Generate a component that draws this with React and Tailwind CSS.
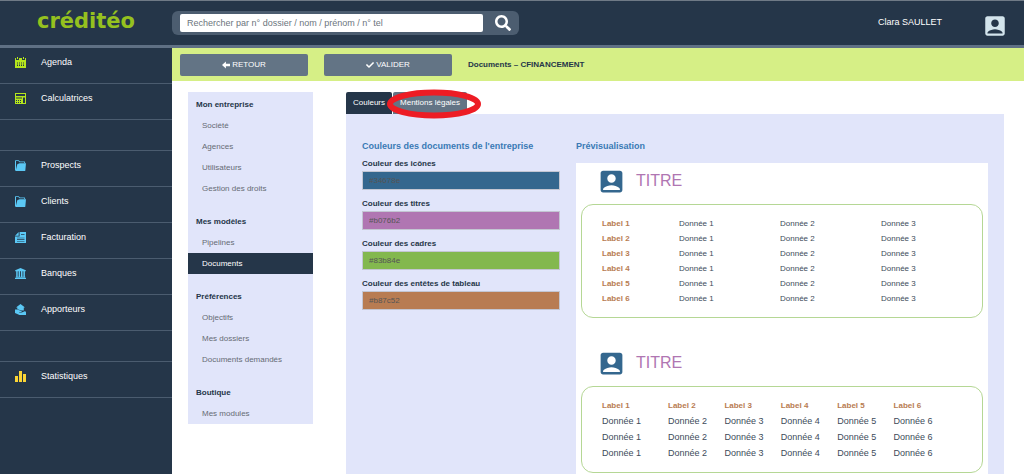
import { MdAccountBox } from 'react-icons/md';
import { FaCheck, FaSearch } from 'react-icons/fa';

const mainMenu = [
    [
        { label: 'Agenda', icon: CalendarIcon, color: 'text-[#b5e61d]' },
        { label: 'Calculatrices', icon: CalculatorIcon, color: 'text-[#b5e61d]' },
    ],
    [
        { label: 'Prospects', icon: FolderIcon, color: 'text-[#5bc8f5]' },
        { label: 'Clients', icon: FolderIcon, color: 'text-[#5bc8f5]' },
        { label: 'Facturation', icon: InvoiceIcon, color: 'text-[#5bc8f5]' },
        { label: 'Banques', icon: BankIcon, color: 'text-[#5bc8f5]' },
        { label: 'Apporteurs', icon: ReferrerIcon, color: 'text-[#5bc8f5]' },
    ],
    [{ label: 'Statistiques', icon: StatsIcon, color: 'text-[#fcd535]' }],
];

const settingsMenu = [
    { title: 'Mon entreprise', items: ['Société', 'Agences', 'Utilisateurs', 'Gestion des droits'] },
    { title: 'Mes modèles', items: ['Pipelines', 'Documents'] },
    { title: 'Préférences', items: ['Objectifs', 'Mes dossiers', 'Documents demandés'] },
    { title: 'Boutique', items: ['Mes modules'] },
];

const colorFields = [
    { id: 'icones', label: 'Couleur des icônes', value: '#34678e', bg: 'bg-[#34678e]' },
    { id: 'titres', label: 'Couleur des titres', value: '#b076b2', bg: 'bg-[#b076b2]' },
    { id: 'cadres', label: 'Couleur des cadres', value: '#83b84e', bg: 'bg-[#83b84e]' },
    { id: 'entetes', label: 'Couleur des entêtes de tableau', value: '#b87c52', bg: 'bg-[#b87c52]' },
];

const numbers = [1, 2, 3, 4, 5, 6];

function CalendarIcon() {
    return (
        <svg viewBox="0 0 11 11" className="size-[11px]" fill="currentColor">
            <path d="M0 1h1v2h3V1h3v2h3V1h1v3H0z" />
            <path d="M2 0h1v2H2zM8 0h1v2H8z" />
            <path
                fillRule="evenodd"
                d="M0 4h11v7H0zM2 5.500v1h1v-1zm2 0v1h1v-1zm2 0v1h1v-1zm2 0v1h1v-1zM2 7.500v1.500h1v-1.500zm2 0v1.500h1v-1.500zm2 0v1.500h1v-1.500zm2 0v1.500h1v-1.500z"
            />
        </svg>
    );
}

function CalculatorIcon() {
    return (
        <svg viewBox="0 0 11 11" className="size-[11px]" fill="currentColor">
            <path
                fillRule="evenodd"
                d="M0 0h11v11H0zM1 1v2h9V1zM1 4.500v1h6v-1zM1 7v1h1V7zm2 0v1h1V7zm2 0v1h1V7zM1 9v1h1V9zm2 0v1h1V9zm2 0v1h1V9zM8 4.500V10h2V4.500z"
            />
        </svg>
    );
}

function FolderIcon() {
    return (
        <svg viewBox="0 0 11 11" className="size-[11px]" fill="currentColor">
            <path d="M0 10.500V.8Q0 .2.600.2h3L5 1.400h4.600q.5 0 .5.500V3H9.200V2.300H4.600L3.300 1.100H1V10.500z" />
            <path d="M2.300 4.200 4.500 3.200H11L10.300 10.400q-.1.600-.7.600H.6z" />
        </svg>
    );
}

function InvoiceIcon() {
    return (
        <svg viewBox="0 0 11 11" className="size-[11px]" fill="currentColor">
            <path
                fillRule="evenodd"
                d="M4.600 0H11v11H0V4.600h4.600zM6 2.200v.8h3.500v-.8zM2 5.700v.6h7.500v-.6zM2 7.300v.6h7.500v-.6zM2 8.900v.6h7.500v-.6z"
            />
            <path d="M3.700 0v3.700H0z" />
        </svg>
    );
}

function BankIcon() {
    return (
        <svg viewBox="0 0 11 11" className="size-[11px]" fill="currentColor">
            <path d="M5.500 0 10.800 2.200V3.300H.2V2.200zM1.200 3.300h1.500v5.700H1.200zM3.600 3.300h1.500v5.700H3.600zM6 3.300h1.500v5.700H6zM8.400 3.300h1.500v5.700H8.400zM.6 8.800h9.800v1H.6zM0 10h11v1H0z" />
        </svg>
    );
}

function ReferrerIcon() {
    return (
        <svg viewBox="0 0 11 11" className="size-[11px]" fill="currentColor">
            <path d="M5.500 0 10 3.400H8.800V6.500H6.500L2.300 5.300V3.400H1z" />
            <path d="M0 5.600h2.300L6.400 7q.7.600 0 1H4.200v.4h2.600l2.900-1.100q1.200 0 1.300.9V11H4.500L0 9z" />
        </svg>
    );
}

function StatsIcon() {
    return (
        <svg viewBox="0 0 11 11" className="size-[11px]" fill="currentColor">
            <path d="M0 5h3v6H0zM4 0h3v11H4zM8 3h3v8H8z" />
        </svg>
    );
}

function BackArrow() {
    return (
        <svg viewBox="0 0 8 8" className="size-2" fill="currentColor">
            <path d="M0 4 3.900.4V2.700H8V5.300H3.900V7.600z" />
        </svg>
    );
}

function TopBar() {
    return (
        <header className="flex h-12 items-stretch border-t border-b-[3px] border-t-[#6f7a86] border-b-[#5f7084] bg-[#253649]">
            <a href="#" className="w-[172px] pl-[37px] font-['DejaVu_Sans',sans-serif] text-[21px] leading-10 font-bold text-[#95c11f]">
                créditéo
            </a>
            <form className="mt-2.5 flex h-6 w-[347px] items-center rounded-md bg-[#4c5d70] px-2">
                <input
                    type="search"
                    aria-label="Rechercher"
                    placeholder="Rechercher par n° dossier / nom / prénom / n° tel"
                    className="h-[18px] min-w-0 flex-1 rounded-xs bg-white px-[7px] text-[9px] text-gray-700 placeholder:text-[#6c757d]"
                />
                <button type="button" aria-label="Lancer la recherche" className="ml-3 text-white">
                    <FaSearch className="size-4" />
                </button>
            </form>
            <div className="ml-auto flex items-start gap-10 pr-4">
                <span className="pt-[15px] text-[9px] leading-3 text-white">Clara SAULLET</span>
                <MdAccountBox className="mt-3 size-[26px] text-[#d3e4ec]" />
            </div>
        </header>
    );
}

function Sidebar() {
    return (
        <nav className="w-[172px] shrink-0 bg-[#253649]">
            {mainMenu.map((group, index) => (
                <ul key={index} className={index > 0 ? 'border-[#4b5c6f] pt-[30px]' : ''}>
                    {group.map(({ label, icon: Icon, color }, row) => (
                        <li
                            key={label}
                            className={`border-b border-[#4b5c6f] ${index > 0 && row === 0 ? 'h-[37px] border-t' : 'h-9'}`}
                        >
                            <a href="#" className="flex h-[29px] items-center gap-[15px] pl-[15px] text-[9px] text-white">
                                <span className={color}>
                                    <Icon />
                                </span>
                                {label}
                            </a>
                        </li>
                    ))}
                </ul>
            ))}
        </nav>
    );
}

function ActionBar() {
    return (
        <div className="flex h-[33px] items-center gap-4 bg-[#d6ef86] px-2">
            <button className="flex h-[22px] w-32 items-center justify-center gap-0.5 rounded-xs bg-[#637485] text-[8px] text-white">
                <BackArrow />
                RETOUR
            </button>
            <button className="flex h-[22px] w-32 items-center justify-center gap-0.5 rounded-xs bg-[#637485] text-[8px] text-white">
                <FaCheck className="size-2" />
                VALIDER
            </button>
            <h1 className="text-[8px] font-bold text-[#253649]">Documents – CFINANCEMENT</h1>
        </div>
    );
}

function SettingsNav() {
    return (
        <nav className="flex w-[125px] shrink-0 flex-col gap-[13px] self-start bg-[#e1e5fa] pt-[3px] text-[8px]">
            {settingsMenu.map((group) => (
                <section key={group.title}>
                    <h2 className="pl-2 leading-5 font-bold text-[#253649]">{group.title}</h2>
                    <ul>
                        {group.items.map((item) => (
                            <li key={item}>
                                <a
                                    href="#"
                                    className={`block pl-3.5 leading-[21px] ${
                                        item === 'Documents' ? 'bg-[#253649] text-white' : 'text-[#666b74]'
                                    }`}
                                >
                                    {item}
                                </a>
                            </li>
                        ))}
                    </ul>
                </section>
            ))}
        </nav>
    );
}

function ColorForm() {
    return (
        <form className="w-[198px] shrink-0">
            <h2 className="text-[9px] leading-4 font-bold text-[#3a7ab5]">Couleurs des documents de l'entreprise</h2>
            <div className="mt-1 flex flex-col gap-2">
                {colorFields.map((field) => (
                    <div key={field.id} className="flex flex-col gap-px text-[8px]">
                        <label htmlFor={field.id} className="leading-3 font-bold text-[#253649]">
                            {field.label}
                        </label>
                        <input
                            id={field.id}
                            type="text"
                            defaultValue={field.value}
                            className={`h-[19px] w-full border border-[#c3c6d2] px-1.5 text-[#555555] ${field.bg}`}
                        />
                    </div>
                ))}
            </div>
        </form>
    );
}

function PreviewTitle() {
    return (
        <div className="flex h-9 items-center gap-2.5 pl-4">
            <MdAccountBox className="size-[29px] text-[#34678e]" />
            <h3 className="text-[16px] text-[#b076b2]">TITRE</h3>
        </div>
    );
}

function Preview() {
    return (
        <section className="flex min-w-0 flex-1 flex-col">
            <h2 className="text-[9px] leading-4 font-bold text-[#3a7ab5]">Prévisualisation</h2>
            <div className="mt-[9px] flex-1 bg-white px-[5px]">
                <PreviewTitle />
                <div className="mt-[5px] h-[114px] rounded-xl border border-[#b5d795] pt-[11px] pl-5">
                    <table className="w-full table-fixed text-left text-[8px] leading-[15px] text-[#3d4b5a]">
                        <tbody>
                            {numbers.map((n) => (
                                <tr key={n}>
                                    <th scope="row" className="w-[77px] font-bold text-[#b87c52]">
                                        Label {n}
                                    </th>
                                    <td>Donnée 1</td>
                                    <td>Donnée 2</td>
                                    <td>Donnée 3</td>
                                </tr>
                            ))}
                        </tbody>
                    </table>
                </div>
                <div className="mt-[27px]">
                    <PreviewTitle />
                </div>
                <div className="mt-[5px] h-[87px] rounded-xl border border-[#b5d795] pt-[11px] pr-8 pl-5">
                    <table className="w-full table-fixed text-left text-[9px] leading-4 text-[#3d4b5a]">
                        <thead>
                            <tr className="text-[8px] leading-[15px] text-[#b87c52]">
                                {numbers.map((n) => (
                                    <th key={n} scope="col" className="font-bold first:w-[66px]">
                                        Label {n}
                                    </th>
                                ))}
                            </tr>
                        </thead>
                        <tbody>
                            {[0, 1, 2].map((row) => (
                                <tr key={row}>
                                    {numbers.map((n) => (
                                        <td key={n}>Donnée {n}</td>
                                    ))}
                                </tr>
                            ))}
                        </tbody>
                    </table>
                </div>
            </div>
        </section>
    );
}

export default function App() {
    return (
        <div className="flex min-h-screen flex-col bg-white font-['Liberation_Sans',Arial,sans-serif]">
            <TopBar />
            <div className="flex flex-1">
                <Sidebar />
                <main className="flex min-w-0 flex-1 flex-col">
                    <ActionBar />
                    <div className="flex flex-1 gap-[33px] pt-[11px] pr-5 pl-4">
                        <SettingsNav />
                        <div className="flex min-w-0 flex-1 flex-col">
                            <div className="relative flex gap-px text-[8px] text-white">
                                <button className="h-[22px] rounded-t-xs bg-[#253649] px-[7px]">Couleurs</button>
                                <button className="h-[22px] rounded-t-xs bg-[#637485] px-[7px]">Mentions légales</button>
                                <svg viewBox="0 0 94 30" className="absolute -top-[3px] left-[41px] h-[30px] w-[94px]" fill="none">
                                    <ellipse cx="47" cy="15" rx="44" ry="11.500" stroke="#ed1c24" strokeWidth="6" />
                                </svg>
                            </div>
                            <div className="flex flex-1 gap-4 bg-[#e1e5fa] px-4 pt-6">
                                <ColorForm />
                                <Preview />
                            </div>
                        </div>
                    </div>
                </main>
            </div>
        </div>
    );
}
